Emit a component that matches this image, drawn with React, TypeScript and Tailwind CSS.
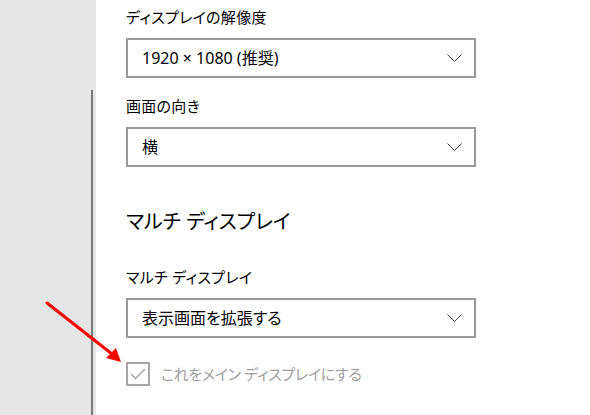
import { ReactNode } from "react";

const FONT = "font-['Noto_Sans','Noto_Sans_CJK_JP',sans-serif] [font-feature-settings:'palt']";

function Chevron() {
  return (
    <svg width="15" height="8" viewBox="0 0 15 8" className="text-[#444]">
      <path d="M0.5 0.5 L7.5 7.5 L14.5 0.5" fill="none" stroke="currentColor" strokeWidth="1" />
    </svg>
  );
}

function Dropdown({ children }: { children: ReactNode }) {
  return (
    <div className="flex h-[40px] w-[350px] items-center justify-between border-2 border-[#999999] bg-white pl-[14px] pr-[12px]">
      <span className="text-[16px] leading-[20px] text-black">{children}</span>
      <Chevron />
    </div>
  );
}

function Label({ children, className = "" }: { children: ReactNode; className?: string }) {
  return <div className={`text-[15px] leading-[20px] tracking-[0.3px] text-black ${className}`}>{children}</div>;
}

export default function App() {
  return (
    <div className={`relative flex h-[415px] w-[590px] overflow-hidden bg-white ${FONT}`}>
      {/* 左側ナビ */}
      <div className="relative w-[96px] shrink-0 bg-[#e6e6e6]">
        <div className="absolute left-[91px] top-[90px] bottom-0 w-[2px] bg-[#7a7a7a]" />
      </div>

      {/* 設定パネル */}
      <div className="flex flex-col pl-[30px]">
        <Label className="mt-[7px] mb-[11px]">ディスプレイの解像度</Label>
        <Dropdown>1920 × 1080 (推奨)</Dropdown>

        <Label className="mt-[18px] mb-[11px]">画面の向き</Label>
        <Dropdown>横</Dropdown>

        <div className="mt-[41px] text-[20px] leading-[28px] text-black">マルチ ディスプレイ</div>

        <Label className="mt-[31px] mb-[11px]">マルチ ディスプレイ</Label>
        <Dropdown>表示画面を拡張する</Dropdown>

        <div className="mt-[24px] flex items-center gap-[11px]">
          <div className="flex h-[24px] w-[24px] items-center justify-center border-2 border-[#a6a6a6]">
            <svg width="16" height="12" viewBox="0 0 16 12">
              <path d="M1 6 L5.5 10.5 L15 1" fill="none" stroke="#a0a0a0" strokeWidth="1.3" />
            </svg>
          </div>
          <span className="text-[15px] leading-[20px] tracking-[-0.3px] text-[#a0a0a0]">これをメイン ディスプレイにする</span>
        </div>
      </div>

      {/* 赤い矢印 */}
      <svg className="pointer-events-none absolute left-0 top-0" width="590" height="415">
        <line x1="47" y1="303" x2="112" y2="354" stroke="#ff0000" strokeWidth="3" strokeLinecap="round" />
        <polygon points="121,362 106,358 116,348" fill="#ff0000" />
      </svg>
    </div>
  );
}
